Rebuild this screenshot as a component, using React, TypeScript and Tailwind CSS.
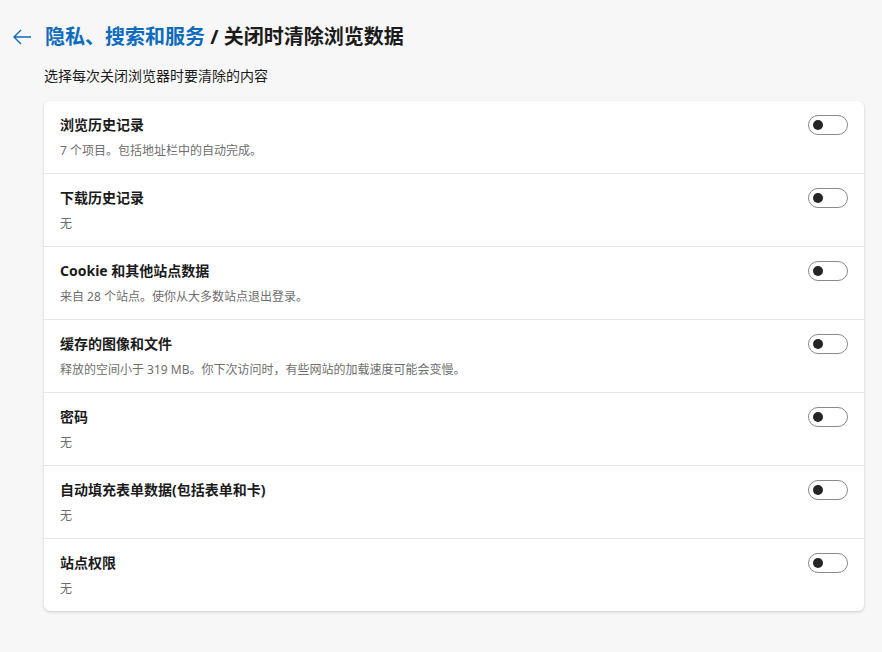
import React from "react";

const rows = [
  { title: "浏览历史记录", sub: "7 个项目。包括地址栏中的自动完成。" },
  { title: "下载历史记录", sub: "无" },
  { title: "Cookie 和其他站点数据", sub: "来自 28 个站点。使你从大多数站点退出登录。" },
  { title: "缓存的图像和文件", sub: "释放的空间小于 319 MB。你下次访问时，有些网站的加载速度可能会变慢。" },
  { title: "密码", sub: "无" },
  { title: "自动填充表单数据(包括表单和卡)", sub: "无" },
  { title: "站点权限", sub: "无" },
];

function Toggle() {
  return (
    <div className="w-[40px] h-[20px] rounded-full border border-[#8a8a8a] bg-white flex items-center pl-[4px] shrink-0">
      <div className="w-[10px] h-[10px] rounded-full bg-[#252525]" />
    </div>
  );
}

export default function App() {
  return (
    <div
      className="w-[882px] h-[652px] bg-[#f7f7f7] text-[#1b1b1b]"
      style={{ fontFamily: '"Segoe UI", "Noto Sans", "Noto Sans CJK SC", sans-serif' }}
    >
      <div className="flex items-center pt-[23px] pl-[12px]">
        <svg width="20" height="16" viewBox="0 0 20 16" className="mr-[13px]">
          <path d="M9 1 L2 8 L9 15 M2 8 H19" fill="none" stroke="#0f6cbd" strokeWidth="1.4" />
        </svg>
        <h1 className="text-[20px] leading-[28px] font-bold">
          <span className="text-[#0f6cbd]">隐私、搜索和服务</span>
          <span> / 关闭时清除浏览数据</span>
        </h1>
      </div>
      <p className="ml-[44px] mt-[15px] text-[14px] leading-[20px] text-[#1b1b1b]">选择每次关闭浏览器时要清除的内容</p>
      <div className="ml-[44px] mt-[15px] w-[820px] bg-white rounded-[6px] shadow-[0_1px_3px_rgba(0,0,0,0.18)]">
        {rows.map((r, i) => (
          <div
            key={i}
            className={`flex items-start justify-between px-[16px] pt-[14px] pb-[14px] ${i < rows.length - 1 ? "border-b border-[#e6e6e6]" : ""}`}
          >
            <div>
              <div className="text-[14px] leading-[20px] font-bold text-[#1b1b1b]">{r.title}</div>
              <div className="mt-[8px] text-[12px] leading-[16px] text-[#6e6e6e]">{r.sub}</div>
            </div>
            <Toggle />
          </div>
        ))}
      </div>
    </div>
  );
}
